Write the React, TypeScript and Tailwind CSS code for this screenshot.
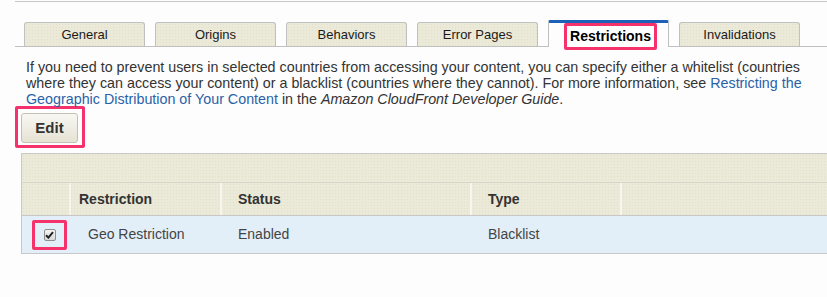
import React from "react";

const tabs = ["General", "Origins", "Behaviors", "Error Pages", "Restrictions", "Invalidations"];

const beige =
  "bg-[#ebe9d8] bg-[radial-gradient(circle,_#e3dfcd_1px,_transparent_1px)] bg-[length:3px_3px]";

const App: React.FC<{}> = () => {
  return (
    <div className="w-[827px] h-[297px] overflow-hidden bg-[#fdfdfd] text-[13px] text-[#333] font-['Liberation_Sans',Arial,sans-serif]">
      <div className="ml-[15px] mt-px border-t border-[#c8c8c8]" />

      {/* tabs */}
      <div className="ml-[15px] mt-[18px] h-[27px] pl-[9px] flex items-end gap-[10px] border-b border-[#c0c0c0]">
        {tabs.map((t) =>
          t === "Restrictions" ? (
            <div
              key={t}
              className="relative w-[121px] h-[27px] -mb-px bg-[#fdfdfd] border-x border-[#c0c0c0] border-t-[3px] border-t-[#1d62b8] rounded-t-[2px] flex justify-center"
            >
              <span className="absolute top-[0px] left-[15px] w-[93px] h-[27px] border-[3px] border-[#f5326c] rounded-[2px] bg-white flex items-center justify-center font-bold text-[14px] text-black">
                {t}
              </span>
            </div>
          ) : (
            <div
              key={t}
              className={`w-[121px] h-[24px] pt-px border border-b-0 border-[#c0c0c0] rounded-t-[3px] flex items-center justify-center text-[#1a1a1a] ${beige}`}
            >
              {t}
            </div>
          )
        )}
      </div>

      {/* description */}
      <p className="ml-[26px] mr-[20px] mt-[12px] text-[14.3px] leading-[16px] text-[#333]">
        If you need to prevent users in selected countries from accessing your content, you can specify either a whitelist (countries
        where they can access your content) or a blacklist (countries where they cannot). For more information, see{" "}
        <a className="text-[#2a62a8]">Restricting the Geographic Distribution of Your Content</a> in the{" "}
        <i>Amazon CloudFront Developer Guide</i>.
      </p>

      {/* edit */}
      <div className="ml-[15px] -mt-px w-[70px] h-[42px] border-[3px] border-[#f5326c] rounded-[2px] pt-[4px] pl-[3px]">
        <button className="w-[57px] h-[30px] rounded-[3px] border border-[#c4c1b4] bg-gradient-to-b from-[#f8f7f2] to-[#e6e3d4] font-bold text-[15px] text-[#333]">
          Edit
        </button>
      </div>

      {/* table */}
      <div className="ml-[21px] mt-[5px] w-[900px] border-t border-l border-[#c8c8c8]">
        <div className={`h-[29px] border-b border-[#d8d6c8] ${beige}`} />
        <div className={`h-[33px] flex font-bold text-[14px] text-[#333] border-b border-[#c8c8c8] ${beige}`}>
          <div className="w-[49px] border-r-2 border-[#f6f5ef]" />
          <div className="w-[151px] pl-[8px] flex items-center border-r-2 border-[#f6f5ef]">Restriction</div>
          <div className="w-[250px] pl-[16px] flex items-center border-r-2 border-[#f6f5ef]">Status</div>
          <div className="w-[150px] pl-[16px] flex items-center border-r-2 border-[#f6f5ef]">Type</div>
          <div className="flex-1" />
        </div>
        <div className="h-[38px] flex items-center bg-[#e2eff9] border-b border-[#c8c8c8] text-[14px] text-[#444]">
          <div className="w-[49px] h-full flex items-center">
            <div className="ml-[10px] w-[35px] h-[30px] border-[3px] border-[#f5326c] rounded-[2px] flex items-center justify-center">
              <div className="w-[12px] h-[12px] rounded-[2px] border border-[#8f8f8f] bg-gradient-to-b from-[#f4f4f4] to-[#d8d8d8] flex items-center justify-center">
                <svg width="9" height="8" viewBox="0 0 9 8">
                  <path d="M1 4.2 L3.4 6.6 L8 1.2" fill="none" stroke="#222" strokeWidth="2" />
                </svg>
              </div>
            </div>
          </div>
          <div className="w-[151px] pl-[17px]">Geo Restriction</div>
          <div className="w-[250px] pl-[16px]">Enabled</div>
          <div className="w-[150px] pl-[16px]">Blacklist</div>
        </div>
      </div>
    </div>
  );
};

export default App;
